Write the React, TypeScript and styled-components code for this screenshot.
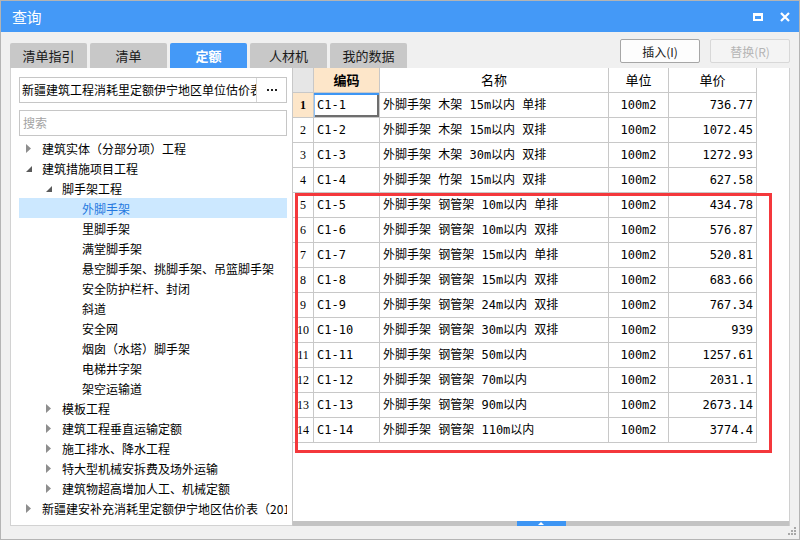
import React from 'react';
import styled, { createGlobalStyle, css } from 'styled-components';

const GlobalStyle = createGlobalStyle`
	html, body {
		margin: 0;
		padding: 0;
		background: #f0f0f0;
	}
	body {
		font-family: "Noto Sans CJK SC", "Noto Sans", sans-serif;
		color: #000;
	}
	* {
		box-sizing: border-box;
	}
`;

const Window = styled.div`
	width: 800px;
	height: 540px;
	border: 1px solid #b4b4b4;
	background: #f0f0f0;
	display: flex;
	flex-direction: column;
`;

const TitleBar = styled.div`
	height: 31px;
	flex: none;
	background: #4499f7;
	display: flex;
	align-items: center;
	justify-content: space-between;
	padding: 0 9px 0 11px;
	color: #fff;
`;

const Title = styled.div`
	font-size: 15px;
	letter-spacing: -0.5px;
`;

const TitleIcons = styled.div`
	display: flex;
	align-items: center;
	gap: 17px;
`;

const Toolbar = styled.div`
	height: 36px;
	flex: none;
	display: flex;
	align-items: flex-end;
	justify-content: space-between;
	padding: 0 9px;
`;

const Tabs = styled.div`
	display: flex;
	gap: 3px;
`;

const Tab = styled.div<{ $active?: boolean }>`
	width: 77px;
	height: 25px;
	border-radius: 2px 2px 0 0;
	background: ${(p) => (p.$active ? '#4499f7' : '#c8c8c8')};
	color: ${(p) => (p.$active ? '#fff' : '#1a1a1a')};
	font-weight: ${(p) => (p.$active ? 700 : 400)};
	font-size: 13px;
	display: flex;
	align-items: center;
	justify-content: center;
`;

const Buttons = styled.div`
	align-self: flex-start;
	margin-top: 7px;
	display: flex;
	gap: 10px;
`;

const Button = styled.div<{ $disabled?: boolean }>`
	width: 80px;
	height: 24px;
	border: 1px solid ${(p) => (p.$disabled ? '#d8d8d8' : '#a6a6a6')};
	border-radius: 2px;
	background: ${(p) => (p.$disabled ? '#f4f4f4' : '#fdfdfd')};
	color: ${(p) => (p.$disabled ? '#b4b4b4' : '#1a1a1a')};
	font-size: 12px;
	display: flex;
	align-items: center;
	justify-content: center;
`;

const Content = styled.div`
	height: 458px;
	flex: none;
	margin: 0 9px;
	display: flex;
`;

const LeftPanel = styled.div`
	width: 282px;
	flex: none;
	background: #fff;
	border-left: 1px solid #d2d2d2;
	border-bottom: 1px solid #d2d2d2;
	padding: 9px 5px 0 8px;
	display: flex;
	flex-direction: column;
	overflow: hidden;
`;

const Select = styled.div`
	height: 26px;
	border: 1px solid #c6c6c6;
	display: flex;
	font-size: 12px;
`;

const SelectText = styled.div`
	flex: 1;
	min-width: 0;
	overflow: hidden;
	white-space: nowrap;
	padding-left: 2px;
	line-height: 24px;
`;

const MoreButton = styled.div`
	width: 30px;
	flex: none;
	border-left: 1px solid #d6d6d6;
	display: flex;
	align-items: center;
	justify-content: center;
	gap: 2px;
	padding-bottom: 1px;
`;

const Dot = styled.span`
	width: 2px;
	height: 2px;
	background: #222;
`;

const Search = styled.div`
	margin-top: 7px;
	height: 26px;
	border: 1px solid #c6c6c6;
	font-size: 12px;
	color: #a3a3a3;
	line-height: 24px;
	padding-left: 3px;
`;

const Tree = styled.div`
	margin-top: 2px;
	display: flex;
	flex-direction: column;
`;

const TreeRow = styled.div<{ $level: number; $selected?: boolean }>`
	height: 20px;
	display: flex;
	align-items: center;
	padding-left: ${(p) => 6 + p.$level * 20}px;
	font-size: 12px;
	white-space: nowrap;
	overflow: hidden;
	${(p) =>
		p.$selected &&
		css`
			background: #cce8ff;
			color: #2478e0;
		`}
`;

const Arrow = styled.span`
	width: 17px;
	flex: none;
	display: flex;
	align-items: center;
`;

const Splitter = styled.div`
	width: 1px;
	flex: none;
	background: #c8c8c8;
`;

const RightPanel = styled.div`
	flex: 1;
	position: relative;
	background: #fff;
	border-right: 1px solid #d0d0d0;
	display: flex;
	flex-direction: column;
`;

const TableArea = styled.div`
	flex: 1;
`;

const Grid = styled.div`
	display: grid;
	grid-template-columns: 21px 66px 229px 60px 88px;
	width: 464px;
`;

const Cell = styled.div<{
	$align?: 'left' | 'center' | 'right';
	$bg?: string;
	$bold?: boolean;
	$head?: boolean;
	$current?: boolean;
}>`
	height: 25px;
	border-right: 1px solid #c8c8c8;
	border-bottom: 1px solid #c8c8c8;
	background: ${(p) => p.$bg || '#fff'};
	text-align: ${(p) => p.$align || 'left'};
	font-weight: ${(p) => (p.$bold ? 700 : 400)};
	font-family: ${(p) =>
		p.$head
			? '"Noto Sans CJK SC", sans-serif'
			: '"DejaVu Sans Mono", "Noto Sans CJK SC", monospace'};
	font-size: ${(p) => (p.$head ? '13px' : '12px')};
	line-height: 24px;
	padding: 0 3px;
	white-space: nowrap;
	overflow: hidden;
	${(p) =>
		p.$current &&
		css`
			box-shadow: inset 0 2px 0 #3d96f4, inset 1px 0 0 #8fc2f7,
				inset -2px 0 0 #6e6e6e, inset 0 -2px 0 #6e6e6e;
		`}
`;

const RowNum = styled(Cell)`
	padding: 0;
	font-family: "Liberation Serif", "DejaVu Serif", serif;
	font-size: 12px;
`;

const Highlight = styled.div`
	position: absolute;
	left: 2px;
	top: 125px;
	width: 477px;
	height: 260px;
	border: 3px solid #f4383c;
	pointer-events: none;
`;

const BottomBar = styled.div`
	height: 5px;
	flex: none;
	background: #c3c3c3;
	display: flex;
	justify-content: center;
`;

const BarHandle = styled.div`
	width: 49px;
	background: #3d95f3;
	display: flex;
	justify-content: center;
	align-items: center;
`;

const Footer = styled.div`
	flex: 1;
	display: flex;
	justify-content: flex-end;
	align-items: flex-end;
	padding: 0 2px 3px 0;
`;

type Node = {
	label: string;
	level: number;
	state: 'open' | 'closed' | 'leaf';
	selected?: boolean;
};

const tree: Node[] = [
	{ label: '建筑实体（分部分项）工程', level: 0, state: 'closed' },
	{ label: '建筑措施项目工程', level: 0, state: 'open' },
	{ label: '脚手架工程', level: 1, state: 'open' },
	{ label: '外脚手架', level: 2, state: 'leaf', selected: true },
	{ label: '里脚手架', level: 2, state: 'leaf' },
	{ label: '满堂脚手架', level: 2, state: 'leaf' },
	{ label: '悬空脚手架、挑脚手架、吊篮脚手架', level: 2, state: 'leaf' },
	{ label: '安全防护栏杆、封闭', level: 2, state: 'leaf' },
	{ label: '斜道', level: 2, state: 'leaf' },
	{ label: '安全网', level: 2, state: 'leaf' },
	{ label: '烟囱（水塔）脚手架', level: 2, state: 'leaf' },
	{ label: '电梯井字架', level: 2, state: 'leaf' },
	{ label: '架空运输道', level: 2, state: 'leaf' },
	{ label: '模板工程', level: 1, state: 'closed' },
	{ label: '建筑工程垂直运输定额', level: 1, state: 'closed' },
	{ label: '施工排水、降水工程', level: 1, state: 'closed' },
	{ label: '特大型机械安拆费及场外运输', level: 1, state: 'closed' },
	{ label: '建筑物超高增加人工、机械定额', level: 1, state: 'closed' },
	{ label: '新疆建安补充消耗里定额伊宁地区估价表（2013）', level: 0, state: 'closed' },
];

const rows = [
	['C1-1', '外脚手架 木架 15m以内 单排', '100m2', '736.77'],
	['C1-2', '外脚手架 木架 15m以内 双排', '100m2', '1072.45'],
	['C1-3', '外脚手架 木架 30m以内 双排', '100m2', '1272.93'],
	['C1-4', '外脚手架 竹架 15m以内 双排', '100m2', '627.58'],
	['C1-5', '外脚手架 钢管架 10m以内 单排', '100m2', '434.78'],
	['C1-6', '外脚手架 钢管架 10m以内 双排', '100m2', '576.87'],
	['C1-7', '外脚手架 钢管架 15m以内 单排', '100m2', '520.81'],
	['C1-8', '外脚手架 钢管架 15m以内 双排', '100m2', '683.66'],
	['C1-9', '外脚手架 钢管架 24m以内 双排', '100m2', '767.34'],
	['C1-10', '外脚手架 钢管架 30m以内 双排', '100m2', '939'],
	['C1-11', '外脚手架 钢管架 50m以内', '100m2', '1257.61'],
	['C1-12', '外脚手架 钢管架 70m以内', '100m2', '2031.1'],
	['C1-13', '外脚手架 钢管架 90m以内', '100m2', '2673.14'],
	['C1-14', '外脚手架 钢管架 110m以内', '100m2', '3774.4'],
];

const tabs = ['清单指引', '清单', '定额', '人材机', '我的数据'];

function TreeArrow({ state }: { state: Node['state'] }) {
	if (state === 'closed') {
		return (
			<svg width="6" height="9" viewBox="0 0 6 9" style={{ marginLeft: 1 }}>
				<polygon points="0,0 5,4.5 0,9" fill="#8e8e8e" />
			</svg>
		);
	}
	if (state === 'open') {
		return (
			<svg width="7" height="7" viewBox="0 0 7 7" style={{ marginLeft: 1, marginTop: 2 }}>
				<polygon points="6,0 6,6 0,6" fill="#5a5a5a" />
			</svg>
		);
	}
	return null;
}

export default function App() {
	return (
		<>
			<GlobalStyle />
			<Window>
				<TitleBar>
					<Title>查询</Title>
					<TitleIcons>
						<svg width="10" height="8" viewBox="0 0 10 8">
							<rect x="1" y="1.5" width="8" height="5.5" fill="none" stroke="#fff" strokeWidth="2" />
							<rect x="0" y="0" width="10" height="3" fill="#fff" />
						</svg>
						<svg width="10" height="10" viewBox="0 0 10 10">
							<path d="M1 1 L9 9 M9 1 L1 9" stroke="#fff" strokeWidth="2.2" />
						</svg>
					</TitleIcons>
				</TitleBar>

				<Toolbar>
					<Tabs>
						{tabs.map((t) => (
							<Tab key={t} $active={t === '定额'}>
								{t}
							</Tab>
						))}
					</Tabs>
					<Buttons>
						<Button>插入(I)</Button>
						<Button $disabled>替换(R)</Button>
					</Buttons>
				</Toolbar>

				<Content>
					<LeftPanel>
						<Select>
							<SelectText>新疆建筑工程消耗里定额伊宁地区单位估价表</SelectText>
							<MoreButton>
								<Dot />
								<Dot />
								<Dot />
							</MoreButton>
						</Select>
						<Search>搜索</Search>
						<Tree>
							{tree.map((n) => (
								<TreeRow key={n.label} $level={n.level} $selected={n.selected}>
									<Arrow>
										<TreeArrow state={n.state} />
									</Arrow>
									{n.label}
								</TreeRow>
							))}
						</Tree>
					</LeftPanel>
					<Splitter />
					<RightPanel>
						<TableArea>
							<Grid>
								<Cell $head $bg="#e6e6e6" />
								<Cell $head $bold $bg="#fde6c9" $align="center">
									编码
								</Cell>
								<Cell $head $align="center">名称</Cell>
								<Cell $head $align="center">单位</Cell>
								<Cell $head $align="center">单价</Cell>
								{rows.map((r, i) => (
									<React.Fragment key={r[0]}>
										<RowNum
											$align="center"
											$bold={i === 0}
											$bg={i === 0 ? '#fde6c9' : undefined}
										>
											{i + 1}
										</RowNum>
										<Cell $current={i === 0}>{r[0]}</Cell>
										<Cell>{r[1]}</Cell>
										<Cell $align="center">{r[2]}</Cell>
										<Cell $align="right">{r[3]}</Cell>
									</React.Fragment>
								))}
							</Grid>
						</TableArea>
						<BottomBar>
							<BarHandle>
								<svg width="6" height="3" viewBox="0 0 6 3">
									<polygon points="0,3 3,0 6,3" fill="#fff" />
								</svg>
							</BarHandle>
						</BottomBar>
						<Highlight />
					</RightPanel>
				</Content>

				<Footer>
					<svg width="9" height="9" viewBox="0 0 9 9">
						<rect x="6" y="0" width="2" height="2" fill="#a8a8a8" />
						<rect x="3" y="3" width="2" height="2" fill="#a8a8a8" />
						<rect x="6" y="3" width="2" height="2" fill="#a8a8a8" />
						<rect x="0" y="6" width="2" height="2" fill="#a8a8a8" />
						<rect x="3" y="6" width="2" height="2" fill="#a8a8a8" />
						<rect x="6" y="6" width="2" height="2" fill="#a8a8a8" />
					</svg>
				</Footer>
			</Window>
		</>
	);
}
